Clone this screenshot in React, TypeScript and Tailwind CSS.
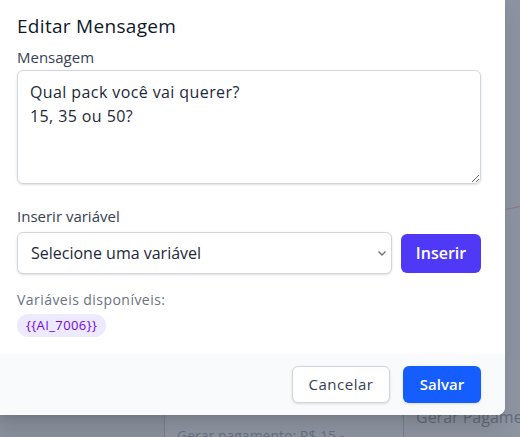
import React, { useState } from 'react';

const App: React.FC = () => {
  const [message, setMessage] = useState('Qual pack você vai querer?\n15, 35 ou 50?');
  const [variable, setVariable] = useState('');

  return (
    <div className="relative h-[437px] w-[520px] overflow-hidden bg-[#f3f4f6] font-['Open_Sans',sans-serif]">
      {/* Canvas behind the dialog */}
      <div className="absolute left-[-20px] top-[405px] h-[60px] w-[370px] bg-[#e9eaee]" />
      <div className="absolute left-[164px] top-[380px] h-[120px] w-[240px] rounded-[40px] border border-[#7fb3ad] bg-white px-3 pt-[44px] text-[14px] text-gray-500">
        Gerar pagamento: R$ 15 -
      </div>
      <div className="absolute left-[403px] top-[360px] h-[120px] w-[200px] border-l border-[#7fb3ad] bg-[#f9fafb] pl-3 pt-[45px] text-[16px] text-gray-600">
        Gerar Pagamento
      </div>
      <div className="absolute left-[470px] top-[208px] h-px w-[80px] -rotate-12 bg-[#e58ea0]" />

      {/* Overlay */}
      <div className="absolute inset-0 bg-gray-500/75" />

      {/* Dialog */}
      <div className="absolute left-[-7px] top-[-12px] w-[512px] overflow-hidden rounded-lg bg-white shadow-xl">
        <div className="px-6 pt-6 pb-[17px]">
          <h3 className="text-[19px] font-medium leading-7 tracking-[0.3px] text-gray-900">Editar Mensagem</h3>

          <label className="mt-[7px] block text-[15px] font-medium leading-5 text-gray-700">Mensagem</label>
          <textarea
            value={message}
            onChange={(e) => setMessage(e.target.value)}
            className="mt-[3px] block h-[114px] w-full rounded-md border border-gray-300 px-3 py-[9px] text-[16px] leading-6 tracking-[0.4px] text-gray-800 shadow-sm outline-none"
          />

          <label className="mt-[22px] block text-[15px] font-medium leading-5 text-gray-700">Inserir variável</label>
          <div className="mt-[6px] flex items-center gap-[9px]">
            <div className="relative flex-1">
              <select
                value={variable}
                onChange={(e) => setVariable(e.target.value)}
                className="block h-[42px] w-full appearance-none rounded-md border border-gray-300 bg-white pl-[13px] pr-8 text-[16px] text-gray-800 shadow-sm outline-none"
              >
                <option value="">Selecione uma variável</option>
                <option value="AI_7006">{'{{AI_7006}}'}</option>
              </select>
              <svg
                className="pointer-events-none absolute right-[4px] top-[15px] h-3 w-3 text-gray-500"
                viewBox="0 0 12 12"
                fill="none"
                stroke="currentColor"
                strokeWidth="1.4"
              >
                <path d="M2.5 4.5 6 8l3.5-3.5" />
              </svg>
            </div>
            <button className="h-[39px] w-[80px] rounded-md bg-indigo-600 text-[16px] font-semibold text-white">
              Inserir
            </button>
          </div>

          <p className="mt-4 text-[14px] leading-5 tracking-[0.45px] text-gray-500">Variáveis disponíveis:</p>
          <div className="mt-1 flex">
            <span className="inline-flex h-[23px] items-center rounded-full bg-violet-100 px-[9px] text-[13px] tracking-[0.4px] text-violet-700">
              {'{{AI_7006}}'}
            </span>
          </div>
        </div>

        <div className="flex justify-end gap-[13px] bg-gray-50 px-6 py-3">
          <button className="h-[37px] w-[98px] rounded-md border border-gray-300 bg-white text-[15px] font-medium tracking-[0.5px] text-gray-700 shadow-sm">
            Cancelar
          </button>
          <button className="h-[37px] w-[78px] rounded-md bg-blue-600 text-[15px] font-semibold text-white shadow-sm">
            Salvar
          </button>
        </div>
      </div>
    </div>
  );
};

export default App;
